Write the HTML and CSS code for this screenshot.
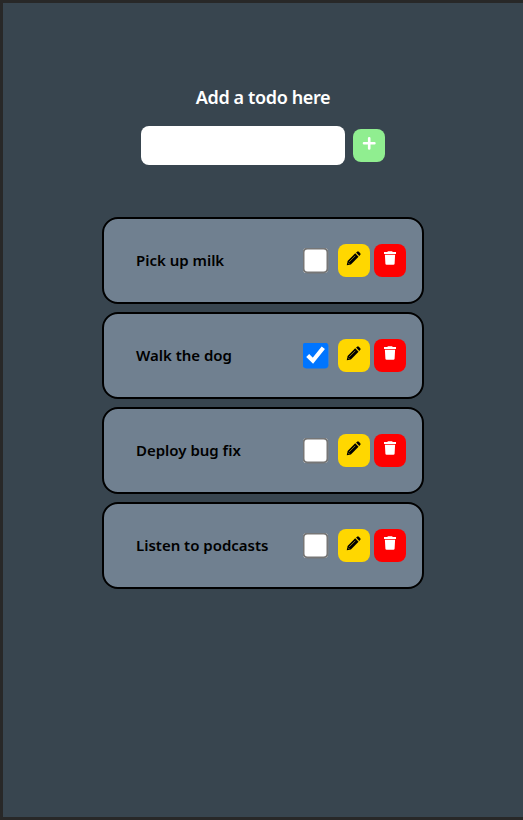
FILE: index.html
```html
<!DOCTYPE html>
<html lang="en">
<head>
<meta charset="utf-8">
<title>Todos</title>
<link rel="stylesheet" href="styles.css">
</head>
<body>
<svg class="defs" width="0" height="0" aria-hidden="true">
  <symbol id="pencil" viewBox="0 0 16 16">
    <path d="M9.8 2.5 13.4 6.1 5.2 14.3 .8 15.2 1.7 10.7Z"/>
    <path d="M10.7 1.7 11.9 .7Q12.8 0 13.7 .8L15.2 2.3Q16 3.2 15.3 4.1L14.2 5.2Z"/>
    <path class="shine" d="M3.4 11.6 9.9 5.1M2.1 12.4 3.6 13.9"/>
  </symbol>
  <symbol id="trash" viewBox="0 0 14 16">
    <path d="M1 2.1H4.3L4.9 1.3H9.1L9.7 2.1H13V4H1ZM1.9 4.7H12.1L11.6 13.7Q11.5 14.8 10.4 14.8H3.6Q2.5 14.8 2.4 13.7Z"/>
  </symbol>
</svg>
<main class="app">
  <form class="add">
    <label class="title" for="todo">Add a todo here</label>
    <div class="row">
      <input class="field" id="todo" type="text">
      <button class="btn plus" type="button" aria-label="Add"><svg width="14" height="14" viewBox="0 0 14 14"><path d="M7.2 2.2V12.4M2 7.3H12.4"/></svg></button>
    </div>
  </form>
  <ul class="list">
    <li class="card"><span class="name">Pick up milk</span><input class="check" type="checkbox"><button class="btn edit"><svg width="15" height="15"><use href="#pencil"/></svg></button><button class="btn delete"><svg width="14" height="16"><use href="#trash"/></svg></button></li>
    <li class="card"><span class="name">Walk the dog</span><input class="check" type="checkbox" checked><button class="btn edit"><svg width="15" height="15"><use href="#pencil"/></svg></button><button class="btn delete"><svg width="14" height="16"><use href="#trash"/></svg></button></li>
    <li class="card"><span class="name">Deploy bug fix</span><input class="check" type="checkbox"><button class="btn edit"><svg width="15" height="15"><use href="#pencil"/></svg></button><button class="btn delete"><svg width="14" height="16"><use href="#trash"/></svg></button></li>
    <li class="card"><span class="name">Listen to podcasts</span><input class="check" type="checkbox"><button class="btn edit"><svg width="15" height="15"><use href="#pencil"/></svg></button><button class="btn delete"><svg width="14" height="16"><use href="#trash"/></svg></button></li>
  </ul>
</main>
</body>
</html>
```
FILE: styles.css
```css
* { box-sizing: border-box; }
body { margin: 0; font-family: "Noto Sans", sans-serif; }
.defs { display: block; height: 0; }
.app {
  height: 820px;
  border: 3px solid #282828;
  border-right: 0;
  background: #38454f;
  display: flex;
  flex-direction: column;
  align-items: center;
  padding-top: 81px;
}
.add { display: flex; flex-direction: column; align-items: center; }
.title {
  height: 26px;
  line-height: 26px;
  color: #fff;
  font-size: 18px;
  font-weight: 600;
  letter-spacing: -0.37px;
  white-space: nowrap;
}
.row { display: flex; gap: 8px; align-items: center; margin-top: 16px; }
.field { width: 204px; height: 39px; border: 0; border-radius: 8px; background: #fff; }
.btn {
  width: 32px;
  height: 33px;
  border: 0;
  border-radius: 8px;
  padding: 7px 0 0;
  display: flex;
  align-items: flex-start;
  justify-content: center;
}
.plus { background: #90ee90; }
.plus path { stroke: #fff; stroke-width: 2.6; stroke-linecap: round; }
.list {
  list-style: none;
  margin: 52px 0 0;
  padding: 0;
  display: flex;
  flex-direction: column;
  gap: 8px;
}
.card {
  width: 322px;
  height: 87px;
  border: 2px solid #000;
  border-radius: 16px;
  background: #708090;
  display: flex;
  align-items: center;
  padding: 0 16px 0 32px;
}
.name {
  flex: 1;
  padding-bottom: 2px;
  font-size: 15px;
  font-weight: 600;
  letter-spacing: -0.01px;
  white-space: nowrap;
}
.check { width: 13px; height: 13px; margin: 0 16px 0 0; transform: scale(2); }
.edit { background: #ffd700; padding-right: 1px; }
.delete { background: #f00; margin-left: 4px; }
.delete svg { fill: #fff; margin-top: -1px; }
.shine { fill: none; stroke: #ffd700; stroke-width: .6; }
```
